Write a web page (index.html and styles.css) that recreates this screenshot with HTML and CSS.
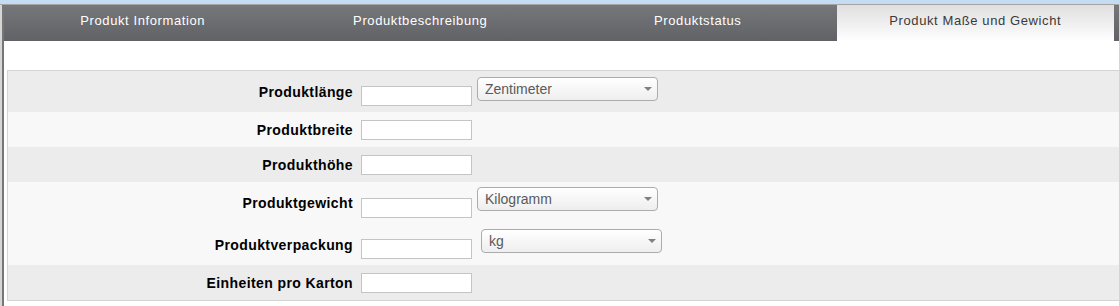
FILE: index.html
```html
<!DOCTYPE html>
<html lang="de">
<head>
<meta charset="utf-8">
<title>Produkt Maße und Gewicht</title>
<link rel="stylesheet" href="styles.css">
</head>
<body>
<div class="topbar"></div>
<div class="wrap">
  <div class="rail"></div>
  <div class="main">
    <nav class="tabs">
      <div class="tab">Produkt Information</div>
      <div class="tab">Produktbeschreibung</div>
      <div class="tab">Produktstatus</div>
      <div class="tab tab--active">Produkt Maße und Gewicht</div>
    </nav>
    <div class="spacer"></div>
    <div class="panel">
      <div class="row row--dark row--unit">
        <label class="label">Produktlänge</label>
        <input class="field" type="text">
        <div class="select"><span>Zentimeter</span><svg class="arrow" width="8" height="4" viewBox="0 0 8 4"><path d="M0 0H8L4 4Z" fill="#808080"/></svg></div>
      </div>
      <div class="row row--light">
        <label class="label">Produktbreite</label>
        <input class="field" type="text">
      </div>
      <div class="row row--dark">
        <label class="label">Produkthöhe</label>
        <input class="field" type="text">
      </div>
      <div class="row row--light row--unit row--tall">
        <label class="label">Produktgewicht</label>
        <input class="field" type="text">
        <div class="select select--up"><span>Kilogramm</span><svg class="arrow" width="8" height="4" viewBox="0 0 8 4"><path d="M0 0H8L4 4Z" fill="#808080"/></svg></div>
      </div>
      <div class="row row--light row--unit">
        <label class="label">Produktverpackung</label>
        <input class="field" type="text">
        <div class="select select--up select--shift"><span>kg</span><svg class="arrow" width="8" height="4" viewBox="0 0 8 4"><path d="M0 0H8L4 4Z" fill="#808080"/></svg></div>
      </div>
      <div class="row row--dark">
        <label class="label">Einheiten pro Karton</label>
        <input class="field" type="text">
      </div>
    </div>
  </div>
</div>
</body>
</html>
```
FILE: styles.css
```css
html, body {
  margin: 0;
  padding: 0;
  background: #ffffff;
  font-family: "Liberation Sans", Arial, sans-serif;
}

.topbar {
  height: 4px;
  background: #c4dcf3;
  border-bottom: 1px solid #a7a3a0;
}

.wrap {
  display: flex;
  height: 301px;
}

.rail {
  width: 2px;
  background: #d6d6d6;
}

.main {
  flex: 1;
  border-left: 2px solid #767676;
}

.tabs {
  display: flex;
  height: 36px;
  background: linear-gradient(#76777a, #616266);
}

.tab {
  width: 277.5px;
  box-sizing: border-box;
  text-align: center;
  color: #ffffff;
  font-size: 13px;
  letter-spacing: 0.6px;
  line-height: 16px;
  padding-top: 8px;
}

.tab--active {
  color: #3a3a3a;
  background: linear-gradient(#e0dedf, #ffffff);
}

.spacer {
  height: 29px;
}

.panel {
  margin-left: 3px;
  border: 1px solid #d4d4d4;
  border-right: none;
}

.row {
  display: flex;
  align-items: center;
  height: 35px;
}

.row--unit {
  height: 41px;
}

.row--tall {
  height: 42px;
}

.row--dark {
  background: #ececec;
}

.row--light {
  background: #f8f8f8;
}

.label {
  width: 345px;
  text-align: right;
  font-weight: bold;
  font-size: 14px;
  letter-spacing: 0.4px;
  color: #000000;
  line-height: 18px;
}

.field {
  margin: 0 0 0 8px;
  width: 111px;
  height: 20px;
  box-sizing: border-box;
  border: 1px solid #c4c4c4;
  background: #ffffff;
  padding: 0;
}

.row--unit .field {
  align-self: flex-end;
  margin-bottom: 6px;
}

.select {
  align-self: flex-start;
  margin: 6px 0 0 5px;
  width: 181px;
  height: 24px;
  box-sizing: border-box;
  border: 1px solid #acacac;
  border-radius: 4px;
  background: linear-gradient(#ffffff, #eeeeee);
  display: flex;
  align-items: center;
  justify-content: space-between;
  padding: 0 5px 0 7px;
  font-size: 14px;
  color: #5a5a5a;
}

.select--up {
  margin-top: 5px;
}

.select--shift {
  margin-left: 9px;
}

.arrow {
  display: block;
}
```
